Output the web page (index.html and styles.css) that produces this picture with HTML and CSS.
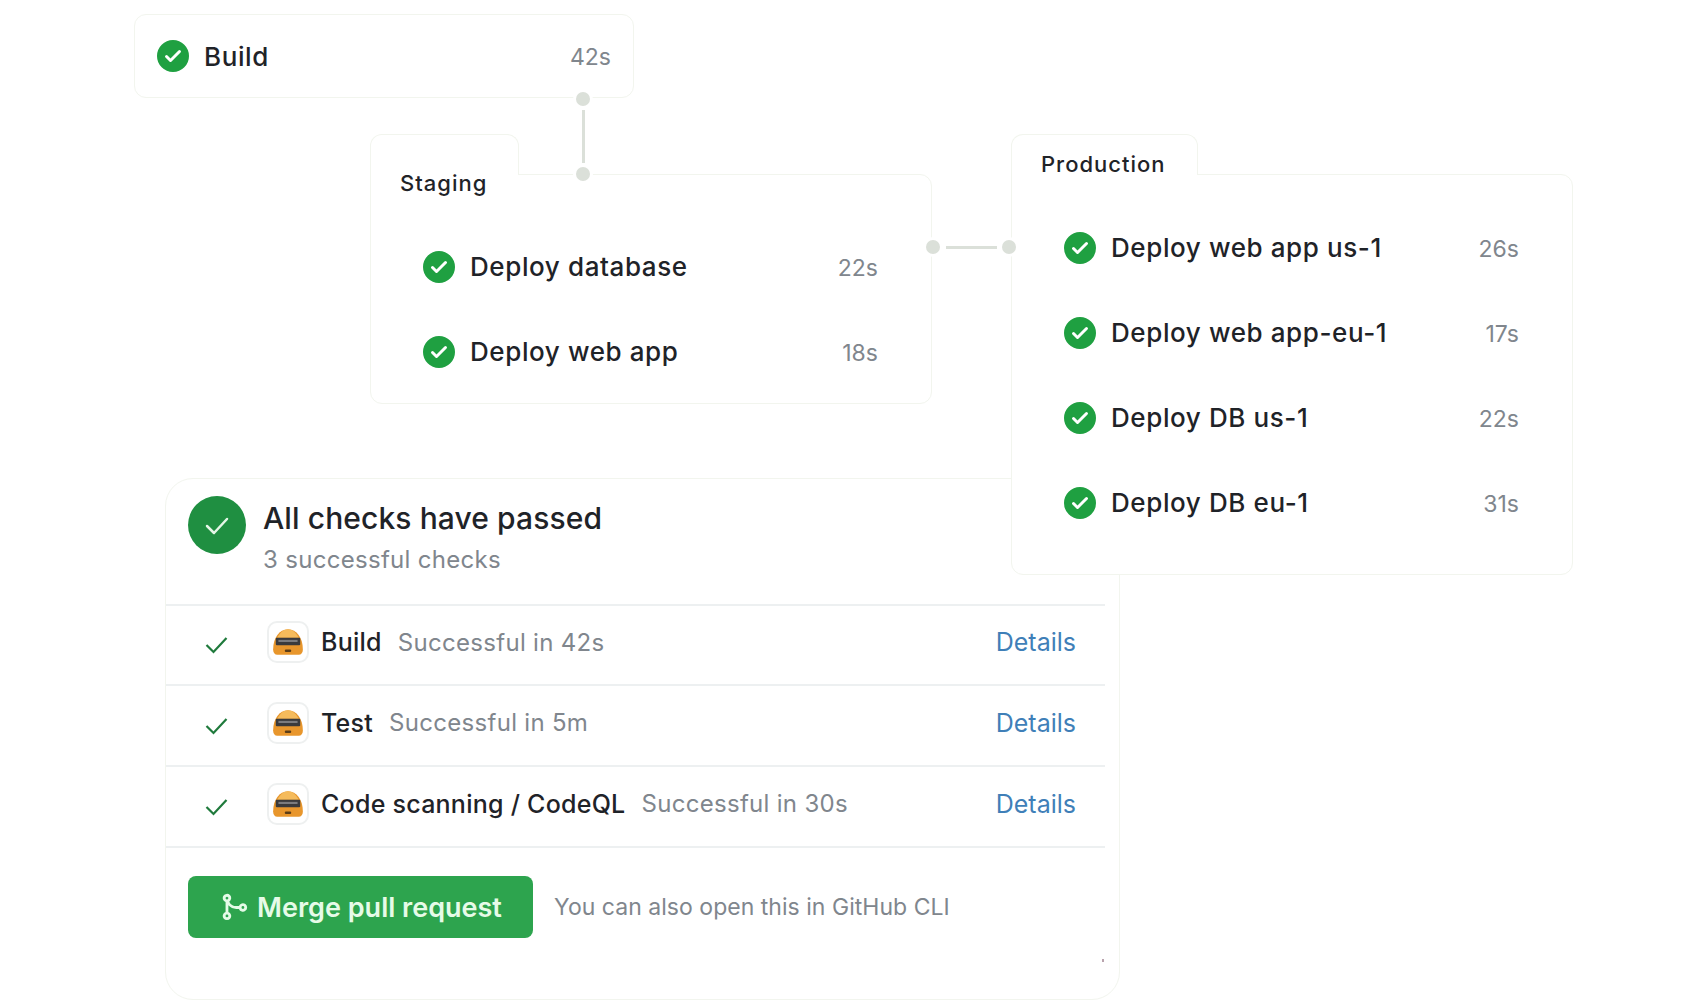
FILE: index.html
```html
<!DOCTYPE html>
<html lang="en">
<head>
  <meta charset="UTF-8">
  <meta name="viewport" content="width=device-width, initial-scale=1.0">
  <title>All checks have passed</title>
  <link rel="stylesheet" href="styles.css">
</head>

<body>
  <svg class="icon-defs" aria-hidden="true">
    <symbol id="check-circle" viewBox="0 0 16 16">
      <path d="M8 16A8 8 0 1 1 8 0a8 8 0 0 1 0 16Zm3.78-9.72a.751.751 0 0 0-.018-1.042.751.751 0 0 0-1.042-.018L6.75 9.19 5.28 7.72a.751.751 0 0 0-1.042.018.751.751 0 0 0-.018 1.042l2 2a.75.75 0 0 0 1.06 0Z"/>
    </symbol>
    <symbol id="bot" viewBox="0 0 32 32">
      <path fill="#e8962c" d="M2 23C2 12 8 4 16 4s14 8 14 19c0 3-1.500 5-4 5H6c-2.500 0-4-2-4-5Z"/>
      <path fill="#f5bb5c" d="M6 12C8.500 7 12 4 16 4s7.500 3 10 8Z"/>
      <rect x="4.500" y="12" width="23" height="7" rx="1" fill="#3a3a3c"/>
      <rect x="7" y="14" width="18" height="2" fill="#7b7b7e"/>
      <rect x="13" y="23" width="6" height="2.500" rx="1" fill="#5b3d17"/>
    </symbol>
  </svg>

  <main class="canvas">
    <section class="check-card">
      <header class="check-head">
        <svg class="summary-badge" viewBox="0 0 58 58" aria-hidden="true">
          <circle cx="29" cy="29" r="29"/>
          <path d="M19 30l7 7 13-14"/>
        </svg>
        <div class="summary-text">
          <h1 class="summary-title">All checks have passed</h1>
          <p class="summary-sub">3 successful checks</p>
        </div>
      </header>

      <ul class="check-list">
        <li class="check-row">
          <svg class="tick" viewBox="0 0 24 20" aria-hidden="true"><path d="M2 10l7 7L22 3"/></svg>
          <span class="avatar"><svg class="bot"><use href="#bot"/></svg></span>
          <span class="check-name">Build</span>
          <span class="check-status">Successful in 42s</span>
          <a class="details" href="#">Details</a>
        </li>
        <li class="check-row">
          <svg class="tick" viewBox="0 0 24 20" aria-hidden="true"><path d="M2 10l7 7L22 3"/></svg>
          <span class="avatar"><svg class="bot"><use href="#bot"/></svg></span>
          <span class="check-name">Test</span>
          <span class="check-status">Successful in 5m</span>
          <a class="details" href="#">Details</a>
        </li>
        <li class="check-row">
          <svg class="tick" viewBox="0 0 24 20" aria-hidden="true"><path d="M2 10l7 7L22 3"/></svg>
          <span class="avatar"><svg class="bot"><use href="#bot"/></svg></span>
          <span class="check-name">Code scanning / CodeQL</span>
          <span class="check-status">Successful in 30s</span>
          <a class="details" href="#">Details</a>
        </li>
      </ul>

      <footer class="merge-box">
        <button class="merge-btn">
          <svg class="merge-icon" viewBox="0 0 16 16" aria-hidden="true">
            <path d="M5.450 5.154A4.250 4.250 0 0 0 9.250 7.500h1.378a2.251 2.251 0 1 1 0 1.500H9.250A5.734 5.734 0 0 1 5 7.123v3.505a2.250 2.250 0 1 1-1.500 0V5.372a2.250 2.250 0 1 1 1.950-.218ZM4.250 13.500a.750.750 0 1 0 0-1.500.750.750 0 0 0 0 1.500Zm8.500-4.500a.750.750 0 1 0 0-1.500.750.750 0 0 0 0 1.500ZM5 3.250a.750.750 0 1 0 0 .005V3.250Z"/>
          </svg>
          Merge pull request
        </button>
        <span class="merge-hint">You can also open this in GitHub CLI</span>
      </footer>
      <span class="speck"></span>
    </section>

    <div class="job job-build">
      <svg class="ok"><use href="#check-circle"/></svg>
      <span class="job-name">Build</span>
      <span class="job-time">42s</span>
    </div>

    <section class="stage stage-staging">
      <div class="stage-tab">Staging</div>
      <div class="stage-body">
        <div class="job">
          <svg class="ok"><use href="#check-circle"/></svg>
          <span class="job-name">Deploy database</span>
          <span class="job-time">22s</span>
        </div>
        <div class="job">
          <svg class="ok"><use href="#check-circle"/></svg>
          <span class="job-name">Deploy web app</span>
          <span class="job-time">18s</span>
        </div>
      </div>
    </section>

    <section class="stage stage-production">
      <div class="stage-tab">Production</div>
      <div class="stage-body">
        <div class="job">
          <svg class="ok"><use href="#check-circle"/></svg>
          <span class="job-name">Deploy web app us-1</span>
          <span class="job-time">26s</span>
        </div>
        <div class="job">
          <svg class="ok"><use href="#check-circle"/></svg>
          <span class="job-name">Deploy web app-eu-1</span>
          <span class="job-time">17s</span>
        </div>
        <div class="job">
          <svg class="ok"><use href="#check-circle"/></svg>
          <span class="job-name">Deploy DB us-1</span>
          <span class="job-time">22s</span>
        </div>
        <div class="job">
          <svg class="ok"><use href="#check-circle"/></svg>
          <span class="job-name">Deploy DB eu-1</span>
          <span class="job-time">31s</span>
        </div>
      </div>
    </section>

    <!-- connectors between the pipeline stages -->
    <span class="link link-v"></span>
    <span class="dot dot-a"></span>
    <span class="dot dot-b"></span>
    <span class="link link-h"></span>
    <span class="dot dot-c"></span>
    <span class="dot dot-d"></span>
  </main>
</body>

</html>
```

FILE: styles.css
```css
:root {
  --green: #2da44e;
  --green-dark: #1f8f41;
  --text: #1f2328;
  --muted: #80868d;
  --blue: #3f7fb8;
  --edge: #f2f5ee;
  --divider: #edf0f1;
  --connector: #dbe0d9;
}

* {
  margin: 0;
  padding: 0;
  box-sizing: border-box;
}

body {
  background: #ffffff;
  color: var(--text);
  font-family: Inter, "Noto Sans", sans-serif;
}

.icon-defs {
  display: none;
}

.canvas {
  position: relative;
  width: 1700px;
  height: 1004px;
  overflow: hidden;
}

/* pipeline */

.job {
  display: flex;
  align-items: center;
  height: 85px;
  padding: 0 53px 0 52px;
  font-size: 26px;
  font-weight: 500;
}

.ok {
  width: 32px;
  height: 32px;
  flex-shrink: 0;
  fill: #1fa041;
}

.job-name {
  margin-left: 15px;
  letter-spacing: 0.6px;
}

.job-time {
  margin: 2px 0 0 auto;
  color: var(--muted);
  font-size: 23px;
  font-weight: 400;
}

.job-build {
  position: absolute;
  left: 134px;
  top: 14px;
  width: 500px;
  height: 84px;
  padding: 0 22px;
  background: #fff;
  border: 1px solid var(--edge);
  border-radius: 12px;
}

.stage {
  position: absolute;
  top: 134px;
  display: flex;
  flex-direction: column;
}

.stage-staging {
  left: 370px;
  width: 562px;
  height: 270px;
}

.stage-production {
  left: 1011px;
  width: 562px;
  height: 441px;
}

.stage-tab {
  position: relative;
  z-index: 1;
  height: 41px;
  margin-bottom: -1px;
  background: #fff;
  border: 1px solid var(--edge);
  border-bottom: 0;
  border-radius: 12px 12px 0 0;
  font-size: 22px;
  font-weight: 500;
  letter-spacing: 1px;
  line-height: 26px;
}

.stage-staging .stage-tab {
  width: 149px;
  padding: 35px 0 0 29px;
}

.stage-production .stage-tab {
  width: 187px;
  padding: 16px 0 0 29px;
}

.stage-body {
  flex: 1;
  background: #fff;
  border: 1px solid var(--edge);
  border-radius: 0 12px 12px 12px;
}

.stage-staging .stage-body {
  padding-top: 49px;
}

.stage-production .stage-body {
  padding-top: 30px;
}

.link,
.dot,
.speck {
  position: absolute;
}

.dot {
  width: 14px;
  height: 14px;
  border-radius: 50%;
  background: var(--connector);
  box-shadow: 0 0 0 3px #fff;
}

.dot-a { left: 576px; top: 92px; }
.dot-b { left: 576px; top: 167px; }
.dot-c { left: 926px; top: 240px; }
.dot-d { left: 1002px; top: 240px; }

.link {
  background: var(--connector);
}

.link-v {
  left: 582px;
  top: 110px;
  width: 3px;
  height: 53px;
}

.link-h {
  left: 946px;
  top: 246px;
  width: 51px;
  height: 3px;
}

/* checks card */

.check-card {
  position: absolute;
  left: 165px;
  top: 478px;
  width: 955px;
  height: 522px;
  background: #fff;
  border: 1px solid var(--edge);
  border-radius: 28px;
}

.check-head {
  display: flex;
  gap: 17px;
  height: 127px;
  padding: 17px 0 0 22px;
  border-bottom: 2px solid var(--divider);
  margin-right: 14px;
}

.summary-badge {
  width: 58px;
  height: 58px;
  flex-shrink: 0;
}

.summary-badge circle {
  fill: var(--green-dark);
}

.summary-badge path {
  fill: none;
  stroke: #e4f6e6;
  stroke-width: 2.5;
  stroke-linecap: round;
  stroke-linejoin: round;
}

.summary-title {
  margin-top: 2px;
  font-size: 30px;
  font-weight: 500;
  line-height: 40px;
  letter-spacing: 0.1px;
}

.summary-sub {
  margin-top: 4px;
  color: var(--muted);
  font-size: 24px;
  line-height: 36px;
  letter-spacing: 0.3px;
}

.check-list {
  list-style: none;
  margin-right: 14px;
}

.check-row {
  display: flex;
  align-items: center;
  height: 81px;
  padding: 0 29px 6px 38px;
  border-bottom: 2px solid var(--divider);
  font-size: 24px;
}

.check-row:first-child {
  height: 80px;
}

.tick {
  width: 25px;
  height: 20px;
  margin-top: 6px;
  fill: none;
  stroke: #1f7a3c;
  stroke-width: 2.2;
}

.avatar {
  display: flex;
  align-items: center;
  justify-content: center;
  width: 42px;
  height: 42px;
  margin-left: 38px;
  border: 2px solid #eef0f0;
  border-radius: 10px;
  flex-shrink: 0;
}

.bot {
  width: 34px;
  height: 34px;
}

.check-name {
  margin-left: 12px;
  font-size: 25px;
  font-weight: 500;
  letter-spacing: 0.25px;
}

.check-status {
  margin-left: 16px;
  color: var(--muted);
  letter-spacing: 0.3px;
}

.details {
  margin-left: auto;
  color: var(--blue);
  font-size: 25px;
  text-decoration: none;
}

.merge-box {
  display: flex;
  align-items: center;
  gap: 21px;
  padding: 28px 0 0 22px;
}

.merge-btn {
  display: flex;
  align-items: center;
  justify-content: center;
  gap: 8px;
  width: 345px;
  height: 62px;
  background: var(--green);
  border: 0;
  border-radius: 8px;
  color: #e6fbe8;
  font-family: inherit;
  font-size: 27px;
  font-weight: 600;
}

.merge-icon {
  width: 30px;
  height: 30px;
  fill: #e6fbe8;
}

.merge-hint {
  color: var(--muted);
  font-size: 23px;
  letter-spacing: 0.03px;
}

.speck {
  right: 15px;
  bottom: 37px;
  width: 2px;
  height: 3px;
  background: #b9a3ad;
}
```
